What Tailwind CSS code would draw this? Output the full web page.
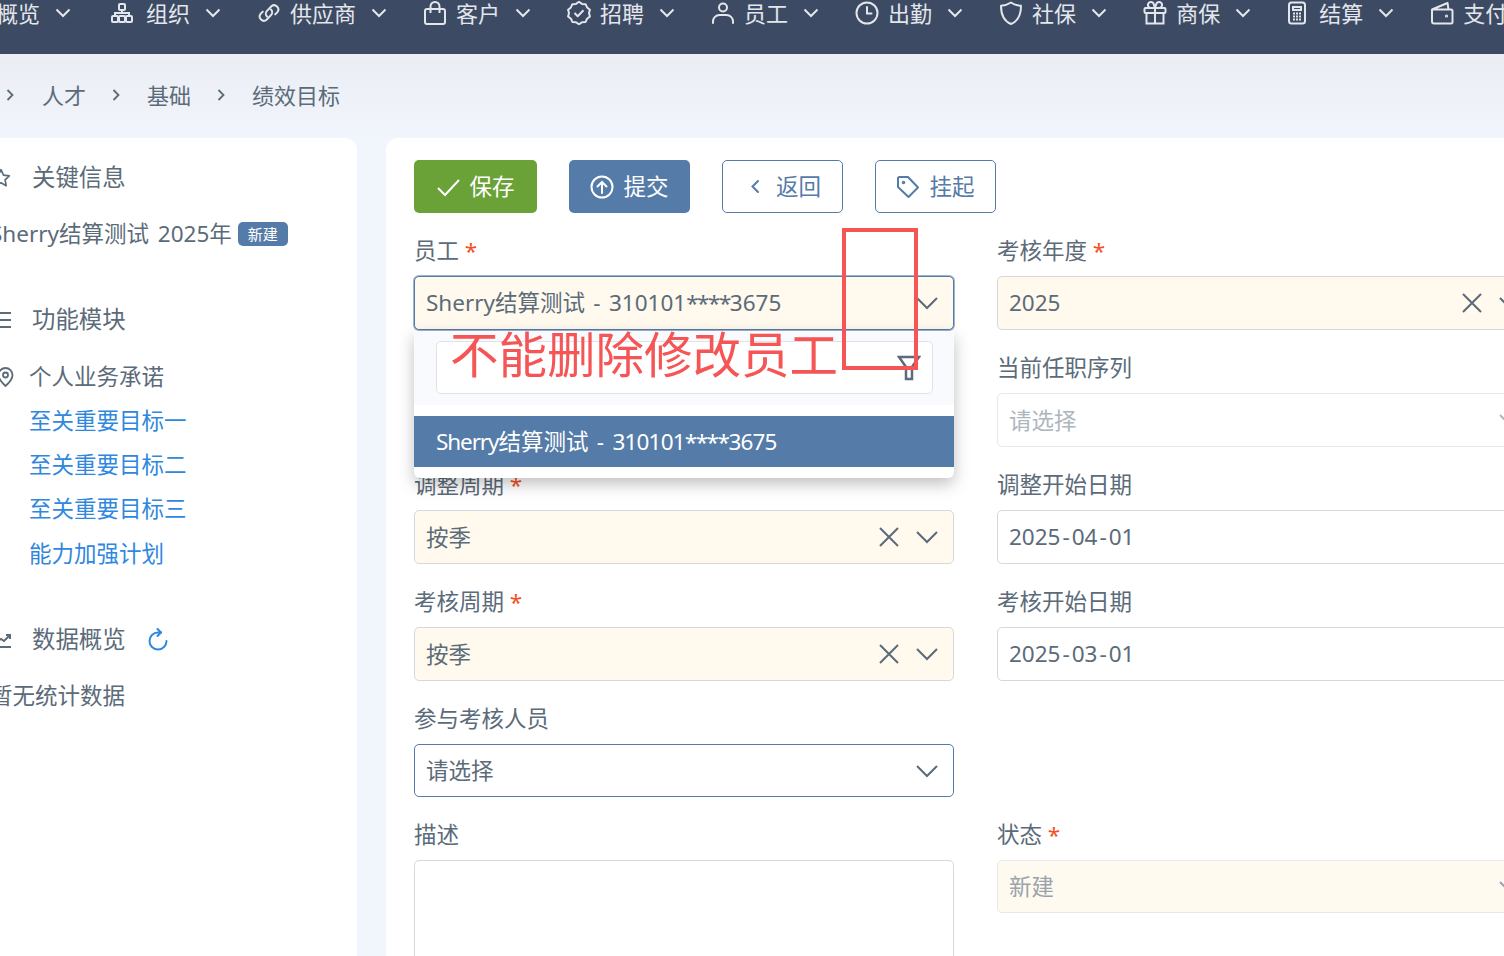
<!DOCTYPE html>
<html lang="zh-CN">

<head>
  <meta charset="UTF-8" />
  <meta name="viewport" content="width=device-width, initial-scale=1.0" />
  <title>绩效目标</title>
  <script src="https://cdn.jsdelivr.net/npm/@tailwindcss/browser@4"></script>
</head>

<body class="relative h-[956px] w-[1504px] overflow-hidden bg-[#f1f5fc] font-['Noto_Sans','Noto_Sans_CJK_SC',sans-serif] text-[22.5px] text-[#5b6b79]">

  <!-- top nav -->
  <header class="h-[54px] overflow-hidden bg-[#3d4a63] text-[#e3e6eb]">
    <nav class="-ml-[4px] flex h-[26px] items-center gap-[36px] whitespace-nowrap text-[22px] leading-[26px]">
      <div class="flex shrink-0 items-center gap-[15px]"><span>概览</span>
        <svg class="h-[10px] w-[16px]" viewBox="0 0 16 10" fill="none" stroke="currentColor" stroke-width="2"><path d="M1.5 1.5 8 8l6.5-6.5"/></svg>
      </div>
      <div class="ml-[3px] flex shrink-0 items-center gap-[15px]">
        <div class="flex items-center gap-[12px]">
          <svg class="h-[24px] w-[24px]" viewBox="0 0 24 24" fill="none" stroke="currentColor" stroke-width="2"><rect x="9" y="3" width="6" height="6" rx="1"/><rect x="2" y="15" width="6" height="6" rx="1"/><rect x="9" y="15" width="6" height="6" rx="1"/><rect x="16" y="15" width="6" height="6" rx="1"/><path d="M12 9v3M5 15v-3h14v3"/></svg>
          <span>组织</span>
        </div>
        <svg class="h-[10px] w-[16px]" viewBox="0 0 16 10" fill="none" stroke="currentColor" stroke-width="2"><path d="M1.5 1.5 8 8l6.5-6.5"/></svg>
      </div>
      <div class="flex shrink-0 items-center gap-[15px]">
        <div class="flex items-center gap-[9px]">
          <svg class="h-[24px] w-[24px]" viewBox="0 0 24 24" fill="none" stroke="currentColor" stroke-width="2" stroke-linecap="round"><path d="M10 15.5a4 4 0 0 1 0-5.6l4.4-4.6a4.2 4.2 0 0 1 6 5.8l-2.2 2.3"/><path d="M14 8.5a4 4 0 0 1 0 5.6l-4.4 4.6a4.2 4.2 0 0 1-6-5.8l2.2-2.3"/></svg>
          <span>供应商</span>
        </div>
        <svg class="h-[10px] w-[16px]" viewBox="0 0 16 10" fill="none" stroke="currentColor" stroke-width="2"><path d="M1.5 1.5 8 8l6.5-6.5"/></svg>
      </div>
      <div class="flex shrink-0 items-center gap-[15px]">
        <div class="flex items-center gap-[9px]">
          <svg class="h-[24px] w-[24px]" viewBox="0 0 24 24" fill="none" stroke="currentColor" stroke-width="2"><rect x="2" y="8" width="20" height="15" rx="2"/><path d="M7.5 12V5.5a4.5 4.5 0 0 1 9 0V12"/></svg>
          <span>客户</span>
        </div>
        <svg class="h-[10px] w-[16px]" viewBox="0 0 16 10" fill="none" stroke="currentColor" stroke-width="2"><path d="M1.5 1.5 8 8l6.5-6.5"/></svg>
      </div>
      <div class="flex shrink-0 items-center gap-[15px]">
        <div class="flex items-center gap-[9px]">
          <svg class="h-[24px] w-[24px]" viewBox="0 0 24 24" fill="none" stroke="currentColor" stroke-width="2" stroke-linejoin="round"><path d="m12 .8 3 2.100 3.600.300 1.500 3.200 2.800 2.300-.9 3.400.9 3.300-2.800 2.300-1.500 3.200-3.600.300-3 2.100-3-2.100-3.600-.300-1.500-3.200-2.800-2.300.9-3.300-.9-3.400 2.800-2.300 1.500-3.200 3.600-.300z"/><path d="m7.500 12 3.200 3.200 5.800-6"/></svg>
          <span>招聘</span>
        </div>
        <svg class="h-[10px] w-[16px]" viewBox="0 0 16 10" fill="none" stroke="currentColor" stroke-width="2"><path d="M1.5 1.5 8 8l6.5-6.5"/></svg>
      </div>
      <div class="flex shrink-0 items-center gap-[15px]">
        <div class="flex items-center gap-[9px]">
          <svg class="h-[24px] w-[24px]" viewBox="0 0 24 24" fill="none" stroke="currentColor" stroke-width="2" stroke-linecap="round"><circle cx="12" cy="6.500" r="4"/><path d="M2 22v-1.500a6.500 6.500 0 0 1 6.500-6.500h7a6.500 6.500 0 0 1 6.500 6.500V22"/></svg>
          <span>员工</span>
        </div>
        <svg class="h-[10px] w-[16px]" viewBox="0 0 16 10" fill="none" stroke="currentColor" stroke-width="2"><path d="M1.5 1.5 8 8l6.5-6.5"/></svg>
      </div>
      <div class="flex shrink-0 items-center gap-[15px]">
        <div class="flex items-center gap-[9px]">
          <svg class="h-[24px] w-[24px]" viewBox="0 0 24 24" fill="none" stroke="currentColor" stroke-width="2" stroke-linecap="round"><circle cx="12" cy="12" r="10.500"/><path d="M12 6v6.500h4.500"/></svg>
          <span>出勤</span>
        </div>
        <svg class="h-[10px] w-[16px]" viewBox="0 0 16 10" fill="none" stroke="currentColor" stroke-width="2"><path d="M1.5 1.5 8 8l6.5-6.5"/></svg>
      </div>
      <div class="flex shrink-0 items-center gap-[15px]">
        <div class="flex items-center gap-[9px]">
          <svg class="h-[24px] w-[24px]" viewBox="0 0 24 24" fill="none" stroke="currentColor" stroke-width="2" stroke-linejoin="round"><path d="M12 1.500c3 2 6 3 10 3.300 0 8-2 15-10 18.200C4 19.800 2 12.800 2 4.800c4-.3 7-1.300 10-3.300z"/></svg>
          <span>社保</span>
        </div>
        <svg class="h-[10px] w-[16px]" viewBox="0 0 16 10" fill="none" stroke="currentColor" stroke-width="2"><path d="M1.5 1.5 8 8l6.5-6.5"/></svg>
      </div>
      <div class="flex shrink-0 items-center gap-[15px]">
        <div class="flex items-center gap-[9px]">
          <svg class="h-[24px] w-[24px]" viewBox="0 0 24 24" fill="none" stroke="currentColor" stroke-width="2"><rect x="1.500" y="7" width="21" height="5" rx="1"/><path d="M3.500 12v10.500h17V12M12 7v15.500"/><path d="M12 7H8a3 3 0 1 1 2.500-4.600L12 7l1.500-4.600A3 3 0 1 1 16 7h-4z"/></svg>
          <span>商保</span>
        </div>
        <svg class="h-[10px] w-[16px]" viewBox="0 0 16 10" fill="none" stroke="currentColor" stroke-width="2"><path d="M1.5 1.5 8 8l6.5-6.5"/></svg>
      </div>
      <div class="flex shrink-0 items-center gap-[15px]">
        <div class="flex items-center gap-[12px]">
          <svg class="h-[24px] w-[20px]" viewBox="0 0 20 24" fill="none" stroke="currentColor" stroke-width="2"><rect x="2" y="1.500" width="16" height="21" rx="2.500"/><path d="M6 6h8v3H6z"/><path d="M6 12.500h8M6 15.500h8M6 18.500h8" stroke-dasharray="2 1"/></svg>
          <span>结算</span>
        </div>
        <svg class="h-[10px] w-[16px]" viewBox="0 0 16 10" fill="none" stroke="currentColor" stroke-width="2"><path d="M1.5 1.5 8 8l6.5-6.5"/></svg>
      </div>
      <div class="flex shrink-0 items-center gap-[9px]">
        <svg class="h-[24px] w-[24px]" viewBox="0 0 24 24" fill="none" stroke="currentColor" stroke-width="2" stroke-linejoin="round"><path d="M2 8.500v12a2 2 0 0 0 2 2h17a1.500 1.500 0 0 0 1.500-1.500V10a1.500 1.500 0 0 0-1.500-1.500H2zM2 8.500 17.500 2l1 6.500"/><circle cx="16.500" cy="15" r=".6"/></svg>
        <span>支付</span>
      </div>
    </nav>
  </header>

  <!-- breadcrumb -->
  <div class="flex h-[84px] items-center bg-gradient-to-b from-[#ebedf3] to-[#f1f5fc] pb-[2px] pl-[6px] text-[22px]">
    <svg class="mr-[27px] h-[12px] w-[9px]" viewBox="0 0 9 12" fill="none" stroke="currentColor" stroke-width="1.800"><path d="m1.500 1 5 5-5 5"/></svg>
    <span>人才</span>
    <svg class="mx-[26px] h-[12px] w-[9px]" viewBox="0 0 9 12" fill="none" stroke="currentColor" stroke-width="1.800"><path d="m1.500 1 5 5-5 5"/></svg>
    <span>基础</span>
    <svg class="mx-[26px] h-[12px] w-[9px]" viewBox="0 0 9 12" fill="none" stroke="currentColor" stroke-width="1.800"><path d="m1.500 1 5 5-5 5"/></svg>
    <span>绩效目标</span>
  </div>

  <main class="flex gap-[29px]">
    <!-- side panel -->
    <aside class="h-[818px] w-[357px] shrink-0 rounded-tr-xl bg-white">
      <div class="-ml-[9px] mt-[23px] flex h-[34px] items-center gap-[21px] text-[23.400px]">
        <svg class="h-[20px] w-[20px]" viewBox="0 0 24 24" fill="none" stroke="currentColor" stroke-width="2" stroke-linejoin="round"><path d="m12 2 3 6.500 7 .9-5.100 4.800 1.300 7L12 17.800l-6.200 3.400 1.300-7L2 9.400l7-.9z"/></svg>
        <span>关键信息</span>
      </div>
      <div class="-ml-[10px] mt-[22px] flex h-[34px] items-center gap-[6px] whitespace-nowrap">
        <span class="[word-spacing:3px]">Sherry结算测试 2025年</span>
        <span class="flex h-[24px] w-[50px] items-center justify-center rounded-[5px] bg-[#557ba8] text-[15px] text-white">新建</span>
      </div>
      <div class="-ml-[9px] mt-[52px] flex h-[34px] items-center gap-[21px] text-[23.400px]">
        <svg class="h-[20px] w-[20px]" viewBox="0 0 20 20" fill="none" stroke="currentColor" stroke-width="2"><path d="M1 3h19M1 10h19M1 17h19"/></svg>
        <span>功能模块</span>
      </div>
      <div class="-ml-[3px] mt-[23px] flex h-[34px] items-center gap-[15px]">
        <svg class="h-[20px] w-[17px]" viewBox="0 0 17 20" fill="none" stroke="currentColor" stroke-width="1.800"><path d="M8.500 19C4 15 1.500 11.500 1.500 8a7 7 0 0 1 14 0c0 3.500-2.500 7-7 11z"/><circle cx="8.500" cy="8" r="2.500"/></svg>
        <span>个人业务承诺</span>
      </div>
      <ul class="ml-[29px] mt-[10px] text-[#2f88de]">
        <li class="flex h-[34px] items-center">至关重要目标一</li>
        <li class="mt-[10px] flex h-[34px] items-center">至关重要目标二</li>
        <li class="mt-[10px] flex h-[34px] items-center">至关重要目标三</li>
        <li class="mt-[11px] flex h-[34px] items-center">能力加强计划</li>
      </ul>
      <div class="-ml-[9px] mt-[52px] flex h-[34px] items-center gap-[21px] text-[23.400px]">
        <svg class="h-[20px] w-[20px]" viewBox="0 0 20 20" fill="none" stroke="currentColor" stroke-width="2"><path d="M2 17h18M4 13l6-4 3 2 6-6M15 5h4v4"/></svg>
        <span>数据概览</span>
        <svg class="h-[24px] w-[22px]" viewBox="0 0 22 24" fill="none" stroke="#2f88de" stroke-width="2" stroke-linecap="round" stroke-linejoin="round"><path d="M19.500 13A8.500 8.500 0 1 1 11 4.500h3"/><path d="M10.500 1 14 4.500 10.500 8"/></svg>
      </div>
      <p class="-ml-[10px] mt-[22px] flex h-[34px] items-center">暂无统计数据</p>
    </aside>

    <!-- form card -->
    <section class="h-[818px] w-[1200px] shrink-0 rounded-tl-xl bg-white pl-[28px] pt-[22px]">
      <div class="flex gap-[32px]">
        <button class="flex h-[53px] w-[123px] items-center justify-center gap-[9px] rounded-[5px] bg-[#6ba237] text-white">
          <svg class="h-[24px] w-[24px]" viewBox="0 0 24 24" fill="none" stroke="currentColor" stroke-width="2"><path d="m2 13 7 7L23 5"/></svg>
          <span>保存</span>
        </button>
        <button class="flex h-[53px] w-[121px] items-center justify-center gap-[9px] rounded-[5px] bg-[#557ba8] text-white">
          <svg class="h-[24px] w-[24px]" viewBox="0 0 24 24" fill="none" stroke="currentColor" stroke-width="2" stroke-linecap="round"><circle cx="12" cy="12" r="10.500"/><path d="M12 18V7M7.500 11.500 12 7l4.500 4.500"/></svg>
          <span>提交</span>
        </button>
        <button class="flex h-[53px] w-[121px] items-center gap-[16px] rounded-[5px] border border-[#557ba8] pl-[27px] text-[#557ba8]">
          <svg class="h-[15px] w-[10px]" viewBox="0 0 10 15" fill="none" stroke="currentColor" stroke-width="2" stroke-linecap="round"><path d="M8 2 2.500 7.500 8 13"/></svg>
          <span>返回</span>
        </button>
        <button class="flex h-[53px] w-[121px] items-center justify-center gap-[9px] rounded-[5px] border border-[#557ba8] text-[#557ba8]">
          <svg class="h-[24px] w-[24px]" viewBox="0 0 24 24" fill="none" stroke="currentColor" stroke-width="2" stroke-linejoin="round"><path d="M2 3.500A1.500 1.500 0 0 1 3.500 2h8.500l10 10.500-9.500 9.500L2 12z"/><circle cx="7.500" cy="7.500" r=".8"/></svg>
          <span>挂起</span>
        </button>
      </div>

      <div class="mt-[21px] grid w-[1123px] grid-cols-[540px_540px] gap-x-[43px] gap-y-[21px]">
        <!-- row 1 -->
        <div>
          <label class="mb-[8px] block h-[34px] leading-[34px]">员工 <span class="text-[#f4511e]">*</span></label>
          <div class="relative z-10 flex h-[54px] items-center justify-between rounded-[5px] border border-[#557ba8] bg-[#fff9ee] pl-[11px] pr-[14px] shadow-[0_0_0_1px_#9db4cf]">
            <span class="[word-spacing:2.500px]">Sherry结算测试 - 310101<span class="tracking-[-1.500px]">****</span>3675</span>
            <svg class="h-[14px] w-[24px]" viewBox="0 0 24 14" fill="none" stroke="currentColor" stroke-width="2"><path d="m2 2 10 10L22 2"/></svg>
            <div class="absolute left-[-1px] top-[54px] h-[147px] w-[540px] overflow-hidden rounded-b-[6px] bg-white shadow-[0_6px_16px_rgba(0,0,0,0.25)]">
              <div class="h-[74px] bg-[#f8fafd] pl-[22px] pr-[21px] pt-[10px]">
                <div class="flex h-[53px] items-center justify-end rounded-[5px] border border-[#dfe2e8] bg-white pr-[11px]">
                  <svg class="h-[26px] w-[24px]" viewBox="0 0 24 26" fill="none" stroke="currentColor" stroke-width="2.500"><path d="M2 2h20l-7 10v12H9V12z"/></svg>
                </div>
              </div>
              <div class="mt-[11px] flex h-[51px] items-center bg-[#557ba8] pl-[22px] text-white">
                <span class="[word-spacing:2.500px]"><span class="tracking-[-1.100px]">Sherry</span>结算测试 - <span class="tracking-[-0.800px]">310101</span><span class="tracking-[-1.500px]">****</span><span class="tracking-[-0.800px]">3675</span></span>
              </div>
            </div>
          </div>
        </div>
        <div>
          <label class="mb-[8px] block h-[34px] leading-[34px]">考核年度 <span class="text-[#f4511e]">*</span></label>
          <div class="flex h-[54px] items-center justify-between rounded-[5px] border border-[#d8d8dc] bg-[#fff9ee] pl-[11px] pr-[14px]">
            <span>2025</span>
            <div class="flex items-center gap-[15px]">
              <svg class="h-[22px] w-[22px]" viewBox="0 0 22 22" fill="none" stroke="currentColor" stroke-width="2"><path d="m2 2 18 18M20 2 2 20"/></svg>
              <svg class="h-[14px] w-[24px]" viewBox="0 0 24 14" fill="none" stroke="currentColor" stroke-width="2"><path d="m2 2 10 10L22 2"/></svg>
            </div>
          </div>
        </div>
        <!-- row 2, the left cell sits behind the open dropdown -->
        <div class="h-[96px]"></div>
        <div>
          <label class="mb-[8px] block h-[34px] leading-[34px]">当前任职序列</label>
          <div class="flex h-[54px] items-center justify-between rounded-[5px] border border-[#e6e8ec] bg-white pl-[11px] pr-[14px] text-[#aeb6bd]">
            <span class="pt-[1px]">请选择</span>
            <svg class="h-[14px] w-[24px]" viewBox="0 0 24 14" fill="none" stroke="currentColor" stroke-width="2"><path d="m2 2 10 10L22 2"/></svg>
          </div>
        </div>
        <!-- row 3 -->
        <div>
          <label class="mb-[8px] block h-[34px] leading-[34px]">调整周期 <span class="text-[#f4511e]">*</span></label>
          <div class="flex h-[54px] items-center justify-between rounded-[5px] border border-[#d8d8dc] bg-[#fff9ee] pl-[11px] pr-[14px]">
            <span class="pt-[1px]">按季</span>
            <div class="flex items-center gap-[15px]">
              <svg class="h-[22px] w-[22px]" viewBox="0 0 22 22" fill="none" stroke="currentColor" stroke-width="2"><path d="m2 2 18 18M20 2 2 20"/></svg>
              <svg class="h-[14px] w-[24px]" viewBox="0 0 24 14" fill="none" stroke="currentColor" stroke-width="2"><path d="m2 2 10 10L22 2"/></svg>
            </div>
          </div>
        </div>
        <div>
          <label class="mb-[8px] block h-[34px] leading-[34px]">调整开始日期</label>
          <div class="flex h-[54px] items-center rounded-[5px] border border-[#d8d8dc] bg-white pl-[11px]">2025<span class="mx-[2px]">-</span>04<span class="mx-[2px]">-</span>01</div>
        </div>
        <!-- row 4 -->
        <div>
          <label class="mb-[8px] block h-[34px] leading-[34px]">考核周期 <span class="text-[#f4511e]">*</span></label>
          <div class="flex h-[54px] items-center justify-between rounded-[5px] border border-[#d8d8dc] bg-[#fff9ee] pl-[11px] pr-[14px]">
            <span class="pt-[1px]">按季</span>
            <div class="flex items-center gap-[15px]">
              <svg class="h-[22px] w-[22px]" viewBox="0 0 22 22" fill="none" stroke="currentColor" stroke-width="2"><path d="m2 2 18 18M20 2 2 20"/></svg>
              <svg class="h-[14px] w-[24px]" viewBox="0 0 24 14" fill="none" stroke="currentColor" stroke-width="2"><path d="m2 2 10 10L22 2"/></svg>
            </div>
          </div>
        </div>
        <div>
          <label class="mb-[8px] block h-[34px] leading-[34px]">考核开始日期</label>
          <div class="flex h-[54px] items-center rounded-[5px] border border-[#d8d8dc] bg-white pl-[11px]">2025<span class="mx-[2px]">-</span>03<span class="mx-[2px]">-</span>01</div>
        </div>
        <!-- row 5 -->
        <div>
          <label class="mb-[8px] block h-[34px] leading-[34px]">参与考核人员</label>
          <div class="flex h-[53px] items-center justify-between rounded-[5px] border border-[#557ba8] bg-white pl-[11px] pr-[14px]">
            <span>请选择</span>
            <svg class="h-[14px] w-[24px]" viewBox="0 0 24 14" fill="none" stroke="currentColor" stroke-width="2"><path d="m2 2 10 10L22 2"/></svg>
          </div>
        </div>
        <div></div>
        <!-- row 6 -->
        <div>
          <label class="mb-[8px] block h-[34px] leading-[34px]">描述</label>
          <div class="h-[150px] rounded-[5px] border border-[#d8d8dc] bg-white"></div>
        </div>
        <div>
          <label class="mb-[8px] block h-[34px] leading-[34px]">状态 <span class="text-[#f4511e]">*</span></label>
          <div class="flex h-[53px] items-center justify-between rounded-[5px] border border-[#e6e8ec] bg-[#fffaf0] pl-[11px] pr-[14px] text-[#9aa3ab]">
            <span>新建</span>
            <svg class="h-[14px] w-[24px]" viewBox="0 0 24 14" fill="none" stroke="currentColor" stroke-width="2"><path d="m2 2 10 10L22 2"/></svg>
          </div>
        </div>
      </div>
    </section>
  </main>

  <!-- red annotation drawn over the screenshot -->
  <div class="absolute left-[842px] top-[228px] z-20 h-[142px] w-[76px] border-[4px] border-[#f55555]"></div>
  <div class="absolute left-[450px] top-[321px] z-20 whitespace-nowrap text-[48.500px] leading-[66px] text-[#f55555]">不能删除修改员工</div>

</body>
</html>
